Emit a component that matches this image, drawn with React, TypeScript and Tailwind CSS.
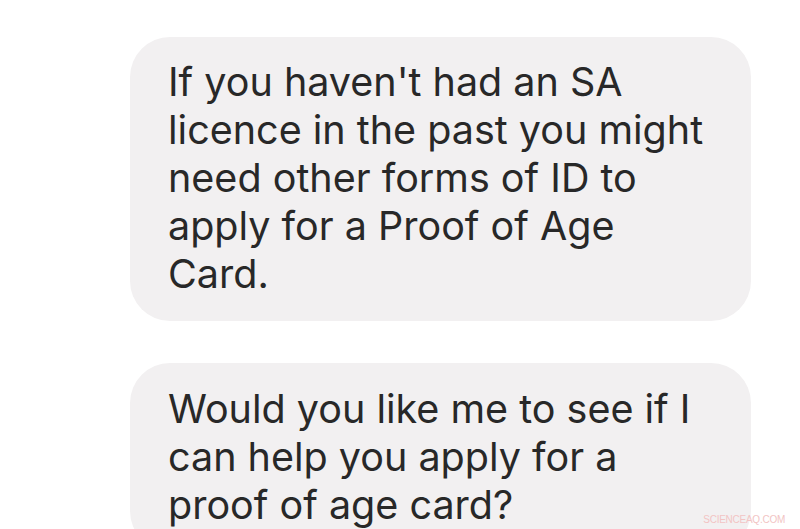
export default function App() {
  return (
    <div className="relative h-[529px] w-[800px] overflow-hidden bg-white font-['Inter',sans-serif] text-[#282828]">
      <div className="flex flex-col gap-[42px] pl-[130px] pt-[37px]">
        <div className="w-[621px] rounded-[40px] bg-[#f2f0f1] pb-[23px] pl-[38px] pr-[36px] pt-[21px] text-[39.5px] leading-[48px]">
          If you haven't had an SA licence in the past you might need other forms of ID to apply for a Proof of Age Card.
        </div>
        <div className="w-[621px] rounded-[40px] bg-[#f2f0f1] pb-[22px] pl-[38px] pr-[36px] pt-[22px] text-[39.5px] leading-[48px]">
          Would you like me to see if I can help you apply for a proof of age card?
        </div>
      </div>
      <span className="absolute bottom-[2px] right-[15px] font-['Liberation_Sans',sans-serif] text-[10px] tracking-tight text-[#f2c4c4]">
        SCIENCEAQ.COM
      </span>
    </div>
  );
}
